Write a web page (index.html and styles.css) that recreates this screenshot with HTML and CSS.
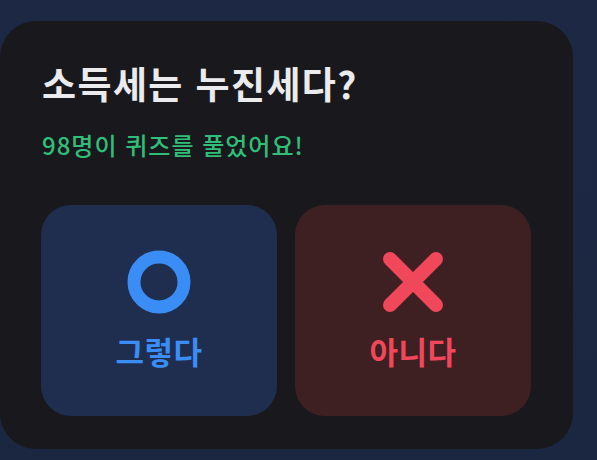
FILE: index.html
```html
<!DOCTYPE html>
<html lang="ko">
<head>
<meta charset="utf-8">
<link rel="stylesheet" href="styles.css">
</head>
<body>
<div class="card">
  <h1 class="title">소득세는 누진세다?</h1>
  <p class="count">98명이 퀴즈를 풀었어요!</p>
  <div class="choices">
    <button class="choice yes">
      <svg class="icon" width="64" height="64" viewBox="0 0 64 64"><circle cx="32" cy="32" r="25" fill="none" stroke="#3b8df6" stroke-width="13"/></svg>
      <span class="label">그렇다</span>
    </button>
    <button class="choice no">
      <svg class="icon" width="64" height="64" viewBox="0 0 64 64"><path d="M9 9 L55 55 M55 9 L9 55" fill="none" stroke="#f0475a" stroke-width="14" stroke-linecap="round"/></svg>
      <span class="label">아니다</span>
    </button>
  </div>
</div>
</body>
</html>
```

FILE: styles.css
```css
html, body {
  margin: 0;
  padding: 0;
}
body {
  width: 597px;
  height: 460px;
  overflow: hidden;
  background: linear-gradient(180deg, #1d2845 0%, #1b2640 100%);
  font-family: "Noto Sans CJK KR", "Noto Sans", sans-serif;
}
.card {
  box-sizing: border-box;
  margin-top: 21px;
  width: 573px;
  height: 428px;
  background: #19191d;
  border-radius: 36px;
  padding: 0 42px 0 41px;
  display: flex;
  flex-direction: column;
}
.title {
  margin: 39px 0 0 1px;
  font-size: 37px;
  font-weight: 700;
  line-height: 46px;
  letter-spacing: 1.4px;
  color: #ebebed;
}
.count {
  margin: 24px 0 0 1px;
  font-size: 24px;
  font-weight: 500;
  line-height: 30px;
  letter-spacing: 1px;
  color: #2fbf79;
}
.choices {
  margin-top: 45px;
  display: flex;
  gap: 18px;
}
.choice {
  width: 236px;
  height: 211px;
  border: none;
  border-radius: 30px;
  padding: 0;
  display: flex;
  flex-direction: column;
  align-items: center;
  font-family: inherit;
}
.yes { background: #1f2d4e; }
.no { background: #3e2022; }
.icon {
  margin-top: 45px;
  display: block;
}
.label {
  margin-top: 17px;
  font-size: 31px;
  font-weight: 700;
  line-height: 40px;
  letter-spacing: 0.5px;
}
.yes .label { color: #3b8df6; }
.no .label { color: #f0475a; }
```
